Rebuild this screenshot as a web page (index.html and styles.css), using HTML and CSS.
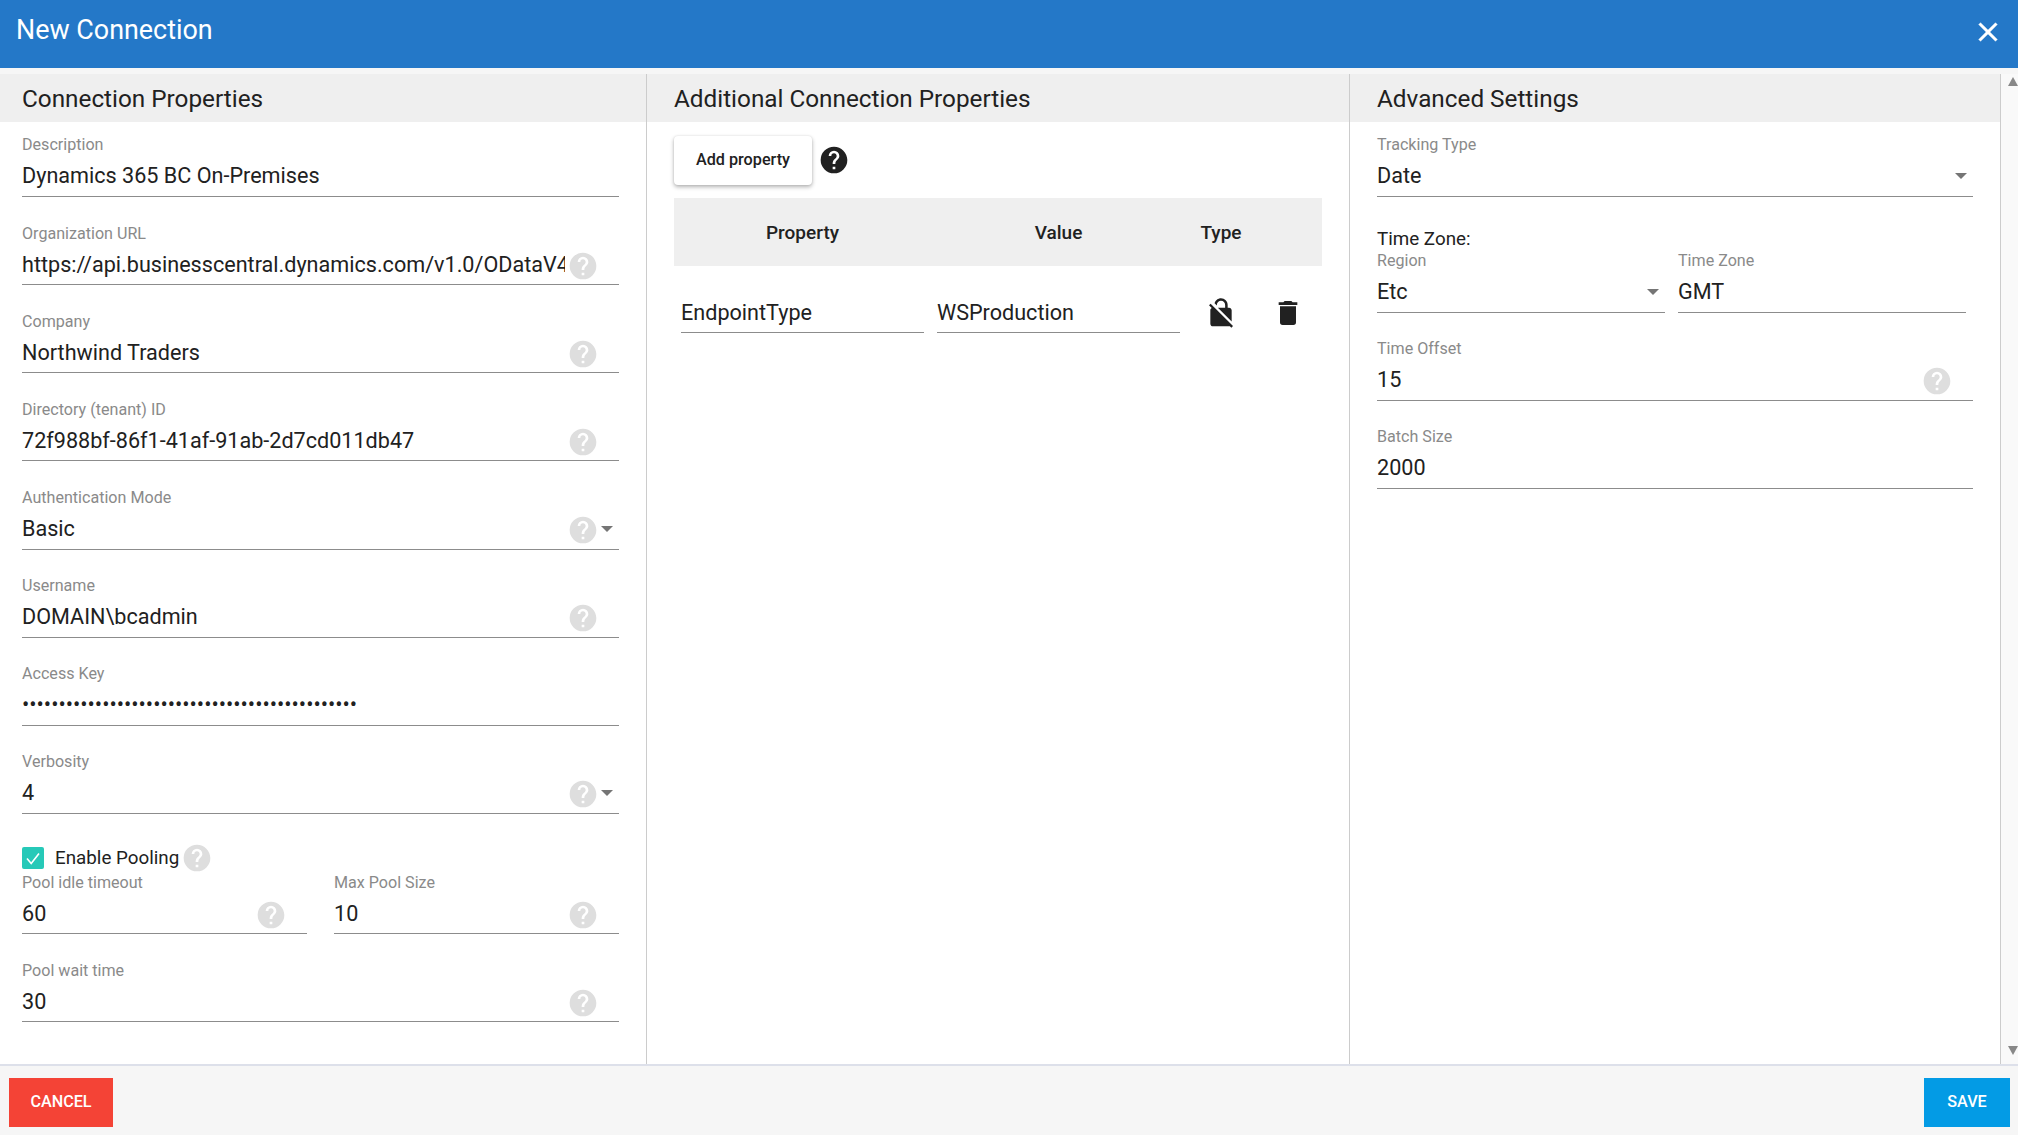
FILE: index.html
```html
<!DOCTYPE html>
<html lang="en">
<head>
<meta charset="utf-8">
<title>New Connection</title>
<link rel="stylesheet" href="styles.css">
</head>
<body>
<svg class="defs" aria-hidden="true">
  <symbol id="i-help" viewBox="0 0 24 24"><path d="M15.07,11.25L14.17,12.17C13.45,12.89 13,13.5 13,15H11V14.5C11,13.39 11.45,12.39 12.17,11.67L13.41,10.41C13.78,10.05 14,9.55 14,9C14,7.89 13.1,7 12,7A2,2 0 0,0 10,9H8A4,4 0 0,1 12,5A4,4 0 0,1 16,9C16,9.88 15.64,10.67 15.07,11.25M13,19H11V17H13M12,2A10,10 0 0,0 2,12A10,10 0 0,0 12,22A10,10 0 0,0 22,12C22,6.47 17.5,2 12,2Z"/></symbol>
</svg>
<header class="topbar">
  <h1 class="title">New Connection</h1>
  <svg class="close" viewBox="0 0 24 24"><path d="M19,6.41L17.59,5L12,10.59L6.41,5L5,6.41L10.59,12L5,17.59L6.41,19L12,13.41L17.59,19L19,17.59L13.41,12L19,6.41Z"/></svg>
</header>
<main class="main">
  <section class="col col-1">
    <h2 class="col-head">Connection Properties</h2>
    <div class="col-body">
      <div class="field"><label class="lbl">Description</label><div class="row"><div class="val">Dynamics 365 BC On-Premises</div></div></div>
      <div class="field"><label class="lbl">Organization URL</label><div class="row"><div class="val">https://api.businesscentral.dynamics.com/v1.0/ODataV4</div><svg class="help"><use href="#i-help"/></svg><span class="slot"></span></div></div>
      <div class="field"><label class="lbl">Company</label><div class="row"><div class="val">Northwind Traders</div><svg class="help"><use href="#i-help"/></svg><span class="slot"></span></div></div>
      <div class="field"><label class="lbl">Directory (tenant) ID</label><div class="row"><div class="val">72f988bf-86f1-41af-91ab-2d7cd011db47</div><svg class="help"><use href="#i-help"/></svg><span class="slot"></span></div></div>
      <div class="field"><label class="lbl">Authentication Mode</label><div class="row"><div class="val">Basic</div><svg class="help"><use href="#i-help"/></svg><span class="slot"><i class="caret"></i></span></div></div>
      <div class="field"><label class="lbl">Username</label><div class="row"><div class="val">DOMAIN\bcadmin</div><svg class="help"><use href="#i-help"/></svg><span class="slot"></span></div></div>
      <div class="field"><label class="lbl">Access Key</label><div class="row"><div class="val">••••••••••••••••••••••••••••••••••••••••••••••</div></div></div>
      <div class="field"><label class="lbl">Verbosity</label><div class="row"><div class="val">4</div><svg class="help"><use href="#i-help"/></svg><span class="slot"><i class="caret"></i></span></div></div>
      <div class="pooling">
        <span class="check"><svg viewBox="0 0 22 22"><path d="M5 11.5l4.2 5L17 6.5"/></svg></span>
        <span class="pool-text">Enable Pooling</span>
        <svg class="help"><use href="#i-help"/></svg>
      </div>
      <div class="pair">
        <div class="field"><label class="lbl">Pool idle timeout</label><div class="row"><div class="val">60</div><svg class="help"><use href="#i-help"/></svg><span class="slot"></span></div></div>
        <div class="field"><label class="lbl">Max Pool Size</label><div class="row"><div class="val">10</div><svg class="help"><use href="#i-help"/></svg><span class="slot"></span></div></div>
      </div>
      <div class="field"><label class="lbl">Pool wait time</label><div class="row"><div class="val">30</div><svg class="help"><use href="#i-help"/></svg><span class="slot"></span></div></div>
    </div>
  </section>
  <section class="col col-2">
    <h2 class="col-head">Additional Connection Properties</h2>
    <div class="col-body">
      <div class="toolbar">
        <button class="add-btn" type="button">Add property</button>
        <svg class="help help-dark"><use href="#i-help"/></svg>
      </div>
      <div class="cols thead"><div>Property</div><div>Value</div><div>Type</div><div></div></div>
      <div class="cols trow">
        <div class="cell"><div class="cell-in">EndpointType</div></div>
        <div class="cell"><div class="cell-in">WSProduction</div></div>
        <div class="cell-icon"><svg class="act" viewBox="0 0 24 24"><path d="M21 21.78L4.22 5 3 6.22l2.04 2.04C4.42 8.6 4 9.25 4 10v10c0 1.1.9 2 2 2h12c.23 0 .45-.05.66-.13l1.12 1.12L21 21.78zM8.9 6c0-1.71 1.39-3.1 3.1-3.1s3.1 1.39 3.1 3.1v2H9.66L20 18.34V10c0-1.1-.9-2-2-2h-1V6c0-2.76-2.24-5-5-5-2.32 0-4.26 1.59-4.82 3.74L8.9 6.46V6z"/></svg></div>
        <div class="cell-icon"><svg class="act" viewBox="0 0 24 24"><path d="M19,4H15.5L14.5,3H9.5L8.5,4H5V6H19M6,19A2,2 0 0,0 8,21H16A2,2 0 0,0 18,19V7H6V19Z"/></svg></div>
      </div>
    </div>
  </section>
  <section class="col col-3">
    <h2 class="col-head">Advanced Settings</h2>
    <div class="col-body">
      <div class="field"><label class="lbl">Tracking Type</label><div class="row"><div class="val">Date</div><span class="slot"><i class="caret"></i></span></div></div>
      <div class="tz-title">Time Zone:</div>
      <div class="pair pair-tz">
        <div class="field"><label class="lbl">Region</label><div class="row"><div class="val">Etc</div><span class="slot"><i class="caret"></i></span></div></div>
        <div class="field"><label class="lbl">Time Zone</label><div class="row"><div class="val">GMT</div></div></div>
      </div>
      <div class="field"><label class="lbl">Time Offset</label><div class="row"><div class="val">15</div><svg class="help"><use href="#i-help"/></svg><span class="slot"></span></div></div>
      <div class="field"><label class="lbl">Batch Size</label><div class="row"><div class="val">2000</div></div></div>
    </div>
  </section>
  <div class="scrollbar"><i class="sb-up"></i><i class="sb-down"></i></div>
</main>
<footer class="footer">
  <button class="btn btn-cancel" type="button">Cancel</button>
  <button class="btn btn-save" type="button">Save</button>
</footer>
</body>
</html>
```

FILE: styles.css
```css
* { box-sizing: border-box; }
html, body { margin: 0; height: 100%; overflow: hidden; }
body {
  display: flex;
  flex-direction: column;
  font-family: Roboto, "Liberation Sans", sans-serif;
  color: #212121;
  background: #f6f6f6;
}
.defs { width: 0; height: 0; position: absolute; }

.topbar {
  flex: 0 0 68px;
  display: flex;
  justify-content: space-between;
  align-items: flex-start;
  background: #2478c8;
  color: #fff;
  padding: 0 14.5px 0 16px;
}
.title { margin: 0; font-size: 26.9px; font-weight: 400; line-height: 60px; }
.close { width: 32px; height: 32px; margin-top: 16px; fill: #fff; stroke: #fff; stroke-width: .3; }

.main { flex: 0 0 990px; margin-top: 6px; display: grid; grid-template-columns: 647px 703px 651px 17px; background: #fff; }
.col { border-right: 1px solid #ccc; min-width: 0; display: flex; flex-direction: column; }
.col-head {
  margin: 0;
  flex: 0 0 48px;
  min-height: 0;
  background: #efefef;
  font-size: 24.3px;
  font-weight: 400;
  line-height: 50px;
}
.col-1 .col-head { padding-left: 22px; }
.col-2 .col-head, .col-3 .col-head { padding-left: 27px; }
.col-body { padding-top: 7.4px; }
.col-1 .col-body { padding-left: 22px; padding-right: 27px; }
.col-2 .col-body { padding: 14px 27px 0; }
.col-3 .col-body { padding-left: 27px; padding-right: 27px; }

.field {
  height: 67.6px;
  margin-bottom: 20.55px;
  padding-top: 6px;
  border-bottom: 1px solid #8c8c8c;
}
.lbl { display: block; height: 20px; font-size: 16.1px; line-height: 20px; color: #8a8a8a; }
.row { display: flex; align-items: flex-start; height: 32px; margin-top: 4px; }
.val {
  flex: 1;
  min-width: 0;
  margin-right: 1.5px;
  font-size: 21.6px;
  line-height: 34px;
  white-space: nowrap;
  overflow: hidden;
}
.help { flex: none; width: 32px; height: 32px; margin-top: 2px; fill: #dedede; }
.help-dark { fill: #212121; margin: 0 0 1px 5.5px; }
.slot { flex: 0 0 20.5px; display: flex; justify-content: flex-end; padding-right: 6px; }
.caret {
  margin-top: 14px;
  width: 0;
  height: 0;
  border-left: 6px solid transparent;
  border-right: 6px solid transparent;
  border-top: 6px solid #757575;
}

.pooling { display: flex; align-items: center; height: 39px; padding-top: 7px; margin-bottom: -7px; }
.check { width: 22px; height: 22px; border-radius: 2px; background: #26c9b8; }
.check svg { display: block; width: 22px; height: 22px; fill: none; stroke: #fff; stroke-width: 1.6; }
.pool-text { margin-left: 11px; font-size: 18.8px; }
.pooling .help { margin: 0 0 0 2px; }

.pair { display: grid; grid-template-columns: 285px 285px; column-gap: 27px; }
.pair-tz { grid-template-columns: 288px 288px; column-gap: 13px; }
.tz-title { height: 27.5px; font-size: 18.8px; line-height: 43px; }

.toolbar { display: flex; align-items: center; height: 49px; margin-bottom: 13px; }
.add-btn {
  width: 138px;
  height: 49px;
  border: 0;
  border-radius: 4px;
  background: #fff;
  color: #212121;
  font: 500 16.2px Roboto, sans-serif;
  padding: 0 0 2px;
  box-shadow: 0 2px 4px rgba(0,0,0,.3), 0 0 2px rgba(0,0,0,.1);
}
.cols { display: grid; grid-template-columns: 256px 243px 82px 52px; padding-left: 7px; }
.cols > :first-child { padding-right: 13px; }
.thead {
  height: 68px;
  background: #efefef;
  font-size: 19px;
  font-weight: 500;
  line-height: 69px;
  text-align: center;
}
.trow { padding-top: 30px; }
.cell-in { height: 37px; font-size: 21.6px; line-height: 34px; border-bottom: 1px solid #8c8c8c; }
.cell-icon { display: flex; justify-content: center; padding-top: 1px; }
.act { width: 32px; height: 32px; fill: #212121; }

.scrollbar { display: flex; flex-direction: column; justify-content: space-between; align-items: flex-end; padding: 3px 0 9px; background: #f9f9f9; }
.sb-up, .sb-down { width: 0; height: 0; border-left: 5.5px solid transparent; border-right: 5.5px solid transparent; }
.sb-up { border-bottom: 9px solid #888; }
.sb-down { border-top: 9px solid #888; }

.footer {
  flex: 1;
  display: flex;
  justify-content: space-between;
  align-items: flex-start;
  padding: 12px 8px 0 9px;
  border-top: 2px solid #dde0ea;
  background: #f6f6f6;
}
.btn {
  height: 49px;
  border: 0;
  color: #fff;
  font: 500 16.2px Roboto, sans-serif;
  text-transform: uppercase;
  padding: 0 0 3px;
}
.btn-cancel { width: 104px; background: #f44336; }
.btn-save { width: 86px; background: #039be5; }
```
